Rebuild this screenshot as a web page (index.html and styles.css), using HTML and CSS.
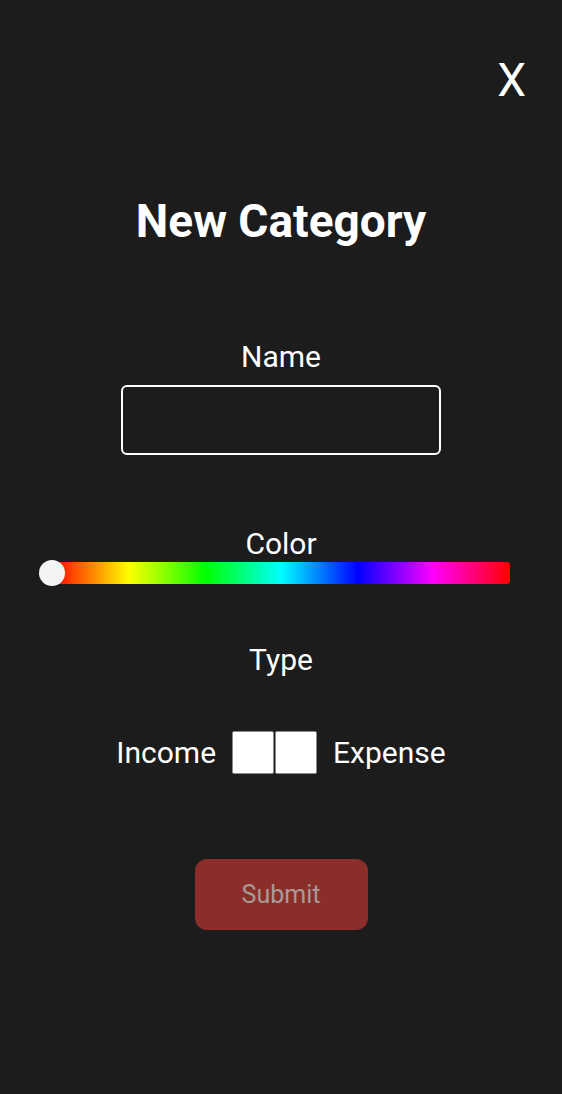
FILE: index.html
```html
<!DOCTYPE html>
<html>
<head>
<meta charset="utf-8">
<link rel="stylesheet" href="styles.css">
</head>
<body>
<div class="page">
  <div class="top-bar">
    <button class="close-btn">X</button>
  </div>
  <h1 class="title">New Category</h1>
  <div class="field name-field">
    <label class="label">Name</label>
    <div class="text-input"></div>
  </div>
  <div class="field color-field">
    <label class="label">Color</label>
    <div class="slider">
      <div class="track"></div>
      <div class="knob"></div>
    </div>
  </div>
  <div class="field type-field">
    <label class="label">Type</label>
  </div>
  <div class="type-row">
    <span class="type-text">Income</span>
    <div class="toggle">
      <div class="toggle-box"></div>
      <div class="toggle-box"></div>
    </div>
    <span class="type-text">Expense</span>
  </div>
  <div class="submit-wrap">
    <button class="submit-btn">Submit</button>
  </div>
</div>
</body>
</html>
```

FILE: styles.css
```css
html, body {
  margin: 0;
  padding: 0;
  background: #1c1c1c;
}
body {
  font-family: Roboto, "Liberation Sans", sans-serif;
  color: #ffffff;
}
.page {
  width: 562px;
  height: 1094px;
  display: flex;
  flex-direction: column;
  align-items: center;
}
.top-bar {
  align-self: stretch;
  display: flex;
  justify-content: flex-end;
  padding: 53px 36px 0 0;
}
.close-btn {
  background: none;
  border: none;
  padding: 0;
  color: #ffffff;
  font-family: Roboto, "Liberation Sans", sans-serif;
  font-size: 46px;
  line-height: 1.2;
}
.title {
  margin: 86px 0 0 0;
  font-size: 46px;
  font-weight: 700;
  line-height: 1.2;
}
.field {
  display: flex;
  flex-direction: column;
  align-items: center;
}
.label {
  font-size: 30px;
  line-height: 1.2;
}
.name-field {
  margin-top: 90px;
}
.text-input {
  margin-top: 10px;
  width: 316px;
  height: 66px;
  border: 2px solid #ffffff;
  border-radius: 6px;
}
.color-field {
  margin-top: 71px;
  align-self: stretch;
}
.slider {
  position: relative;
  margin-top: 0;
  width: 458px;
  margin-left: 52px;
  align-self: flex-start;
  height: 22px;
}
.track {
  height: 22px;
  border-radius: 0 3px 3px 0;
  background: linear-gradient(to right, #ff0000 0%, #ffff00 16.8%, #00ff00 33.6%, #00ffff 50%, #0000ff 66.8%, #ff00ff 83.2%, #ff0000 100%);
}
.knob {
  position: absolute;
  left: -13px;
  top: -2px;
  width: 26px;
  height: 26px;
  border-radius: 50%;
  background: #f4f4f6;
}
.type-field {
  margin-top: 58px;
}
.type-row {
  margin-top: 53px;
  display: flex;
  align-items: center;
  gap: 16px;
}
.type-text {
  font-size: 30px;
  line-height: 1.2;
}
.toggle {
  display: flex;
  gap: 1px;
}
.toggle-box {
  width: 40px;
  height: 41px;
  background: #ffffff;
  border: 1px solid #8a8a8a;
  border-radius: 2px;
}
.submit-wrap {
  margin-top: 85px;
}
.submit-btn {
  width: 173px;
  height: 71px;
  border: none;
  border-radius: 12px;
  background: #8b2e29;
  color: #a89a98;
  font-family: Roboto, "Liberation Sans", sans-serif;
  font-size: 25px;
}
```
